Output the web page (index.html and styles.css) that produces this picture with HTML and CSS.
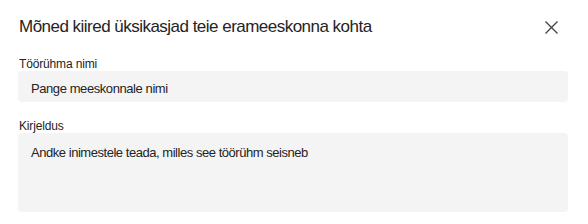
FILE: index.html
```html
<!DOCTYPE html>
<html lang="et">
<head>
<meta charset="utf-8">
<link rel="stylesheet" href="styles.css">
</head>
<body>
<div class="dialog">
  <div class="header">
    <h1 class="title">Mõned kiired üksikasjad teie erameeskonna kohta</h1>
    <button class="close" aria-label="Sulge">
      <svg width="13" height="13" viewBox="0 0 13 13"><path d="M0.5 0.5 L12.5 12.5 M12.5 0.5 L0.5 12.5" stroke="#424242" stroke-width="1.3" fill="none"/></svg>
    </button>
  </div>
  <div class="field field-first">
    <label class="label">Töörühma nimi</label>
    <div class="input">Pange meeskonnale nimi</div>
  </div>
  <div class="field field-next">
    <label class="label">Kirjeldus</label>
    <div class="input textarea">Andke inimestele teada, milles see töörühm seisneb</div>
  </div>
</div>
</body>
</html>
```
FILE: styles.css
```css
html, body {
  margin: 0;
  padding: 0;
  background: #ffffff;
}
body {
  font-family: "Liberation Sans", Arial, sans-serif;
  color: #242424;
}
.dialog {
  padding: 15px 20px 0 18px;
}
.header {
  display: flex;
  align-items: center;
  justify-content: space-between;
  height: 24px;
}
.title {
  margin: 0 0 0 1px;
  font-size: 17px;
  font-weight: 400;
  line-height: 24px;
  letter-spacing: -0.52px;
}
.close {
  border: 0;
  background: none;
  padding: 0;
  margin-right: 10px;
  width: 13px;
  height: 13px;
  display: flex;
}
.field {
  display: flex;
  flex-direction: column;
}
.field-first {
  margin-top: 18px;
}
.field-next {
  margin-top: 17px;
}
.label {
  font-size: 12px;
  line-height: 14px;
  padding-left: 1px;
  letter-spacing: -0.15px;
}
.input {
  background: #f4f4f4;
  border-radius: 4px;
  height: 31px;
  box-sizing: border-box;
  padding: 10px 12px 0 13px;
  font-size: 13px;
  line-height: 16px;
  letter-spacing: -0.42px;
}
.textarea {
  height: 79px;
  padding-top: 12px;
  letter-spacing: -0.46px;
}
```
